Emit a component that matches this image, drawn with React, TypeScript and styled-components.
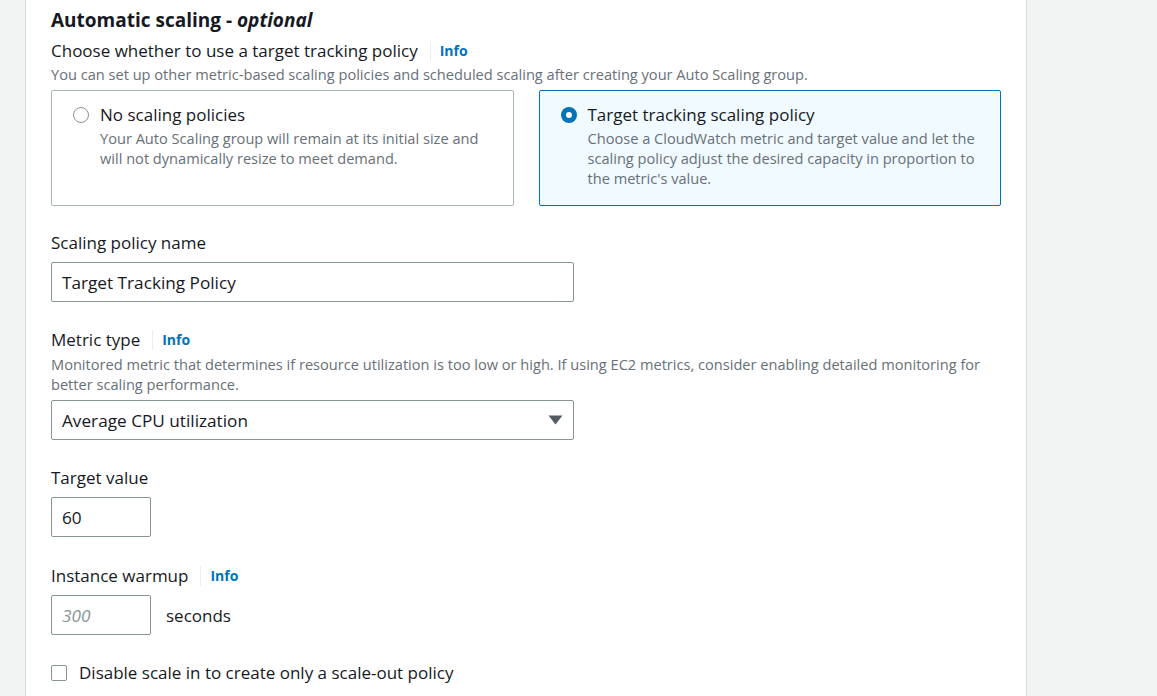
import React from "react";
import styled, { createGlobalStyle } from "styled-components";

const GlobalStyle = createGlobalStyle`
  html, body { margin: 0; padding: 0; }
  body {
    background: #f2f3f3;
    font-family: "Open Sans", "Noto Sans", sans-serif;
    color: #16191f;
    overflow: hidden;
  }
  * { box-sizing: border-box; }
`;

const Page = styled.div`
  display: flex;
  padding-left: 25px;
  height: 696px;
`;

const Panel = styled.section`
  width: 1002px;
  background: #ffffff;
  border-left: 1px solid #d5dbdb;
  border-right: 1px solid #d5dbdb;
  padding: 9px 25px 0 25px;
  display: flex;
  flex-direction: column;
`;

const Heading = styled.h2`
  margin: 0;
  font-size: 19px;
  line-height: 22px;
  font-weight: 700;
  color: #16191f;
  em { font-style: italic; font-weight: 700; }
`;

const Field = styled.div<{ $mt: number }>`
  margin-top: ${(p) => p.$mt}px;
  display: flex;
  flex-direction: column;
`;

const LabelRow = styled.div`
  display: flex;
  align-items: center;
  font-size: 17px;
  line-height: 22px;
  color: #16191f;
`;

const InfoLink = styled.a`
  display: inline-flex;
  align-items: center;
  margin-left: 12px;
  padding-left: 9px;
  border-left: 1px solid #eaeded;
  height: 20px;
  font-size: 14px;
  font-weight: 700;
  color: #0073bb;
  text-decoration: none;
`;

const Description = styled.div<{ $mt: number }>`
  font-size: 14.6px;
  line-height: 20px;
  color: #687078;
  margin-top: ${(p) => p.$mt}px;
`;

const Tiles = styled.div`
  margin-top: 6px;
  display: grid;
  grid-template-columns: 1fr 1fr;
  gap: 25px;
`;

const Tile = styled.div<{ $selected?: boolean }>`
  border: 1px solid ${(p) => (p.$selected ? "#0073bb" : "#aab7b8")};
  background: ${(p) => (p.$selected ? "#f1faff" : "#ffffff")};
  border-radius: 2px;
  padding: 13px 20px 17px 21px;
  display: flex;
  gap: 11px;
`;

const Radio = styled.span<{ $checked?: boolean }>`
  flex: none;
  width: 16px;
  height: 16px;
  margin-top: 3px;
  border-radius: 50%;
  border: ${(p) => (p.$checked ? "5px solid #0073bb" : "1.5px solid #879596")};
  background: #ffffff;
`;

const TileText = styled.div`
  display: flex;
  flex-direction: column;
`;

const TileTitle = styled.div`
  font-size: 17px;
  line-height: 22px;
  color: #16191f;
`;

const TileDesc = styled.div`
  font-size: 14.6px;
  line-height: 20px;
  color: #687078;
  margin-top: 2px;
`;

const InputBox = styled.div<{ $width: number; $mt?: number }>`
  width: ${(p) => p.$width}px;
  height: 40px;
  margin-top: ${(p) => p.$mt ?? 8}px;
  border: 1px solid #879596;
  border-radius: 2px;
  background: #ffffff;
  padding: 0 10px;
  display: flex;
  align-items: center;
  justify-content: space-between;
  font-size: 17.2px;
  color: #16191f;
`;

const Placeholder = styled.span`
  font-style: italic;
  color: #879596;
`;

const Inline = styled.div`
  display: flex;
  align-items: center;
  gap: 15px;
  margin-top: 8px;
  font-size: 17px;
`;

const CheckRow = styled.label`
  margin-top: 27px;
  display: flex;
  align-items: center;
  gap: 12px;
  font-size: 17px;
  line-height: 22px;
  color: #16191f;
`;

const CheckBox = styled.span`
  width: 16px;
  height: 16px;
  border: 1.5px solid #879596;
  border-radius: 2px;
  background: #fff;
`;

const Caret = () => (
  <svg width="15" height="10" viewBox="0 0 15 10">
    <polygon points="0.5,0.5 14.5,0.5 7.5,9.5" fill="#545b64" />
  </svg>
);

export default function App() {
  return (
    <>
      <GlobalStyle />
      <Page>
        <Panel>
          <Heading>
            Automatic scaling - <em>optional</em>
          </Heading>
          <Field $mt={9}>
            <LabelRow>
              Choose whether to use a target tracking policy
              <InfoLink>Info</InfoLink>
            </LabelRow>
            <Description $mt={2}>
              You can set up other metric-based scaling policies and scheduled scaling after creating your Auto Scaling group.
            </Description>
          </Field>
          <Tiles>
            <Tile>
              <Radio />
              <TileText>
                <TileTitle>No scaling policies</TileTitle>
                <TileDesc>
                  Your Auto Scaling group will remain at its initial size and will not dynamically resize to meet demand.
                </TileDesc>
              </TileText>
            </Tile>
            <Tile $selected>
              <Radio $checked />
              <TileText>
                <TileTitle>Target tracking scaling policy</TileTitle>
                <TileDesc>
                  Choose a CloudWatch metric and target value and let the scaling policy adjust the desired capacity in proportion to the metric's value.
                </TileDesc>
              </TileText>
            </Tile>
          </Tiles>
          <Field $mt={26}>
            <LabelRow>Scaling policy name</LabelRow>
            <InputBox $width={523}>Target Tracking Policy</InputBox>
          </Field>
          <Field $mt={27}>
            <LabelRow>
              Metric type
              <InfoLink>Info</InfoLink>
            </LabelRow>
            <Description $mt={3}>
              Monitored metric that determines if resource utilization is too low or high. If using EC2 metrics, consider enabling detailed monitoring for better scaling performance.
            </Description>
            <InputBox $width={523} $mt={6}>
              Average CPU utilization
              <Caret />
            </InputBox>
          </Field>
          <Field $mt={27}>
            <LabelRow>Target value</LabelRow>
            <InputBox $width={100}>60</InputBox>
          </Field>
          <Field $mt={28}>
            <LabelRow>
              Instance warmup
              <InfoLink>Info</InfoLink>
            </LabelRow>
            <Inline>
              <InputBox $width={100} $mt={0}>
                <Placeholder>300</Placeholder>
              </InputBox>
              seconds
            </Inline>
          </Field>
          <CheckRow>
            <CheckBox />
            Disable scale in to create only a scale-out policy
          </CheckRow>
        </Panel>
      </Page>
    </>
  );
}
